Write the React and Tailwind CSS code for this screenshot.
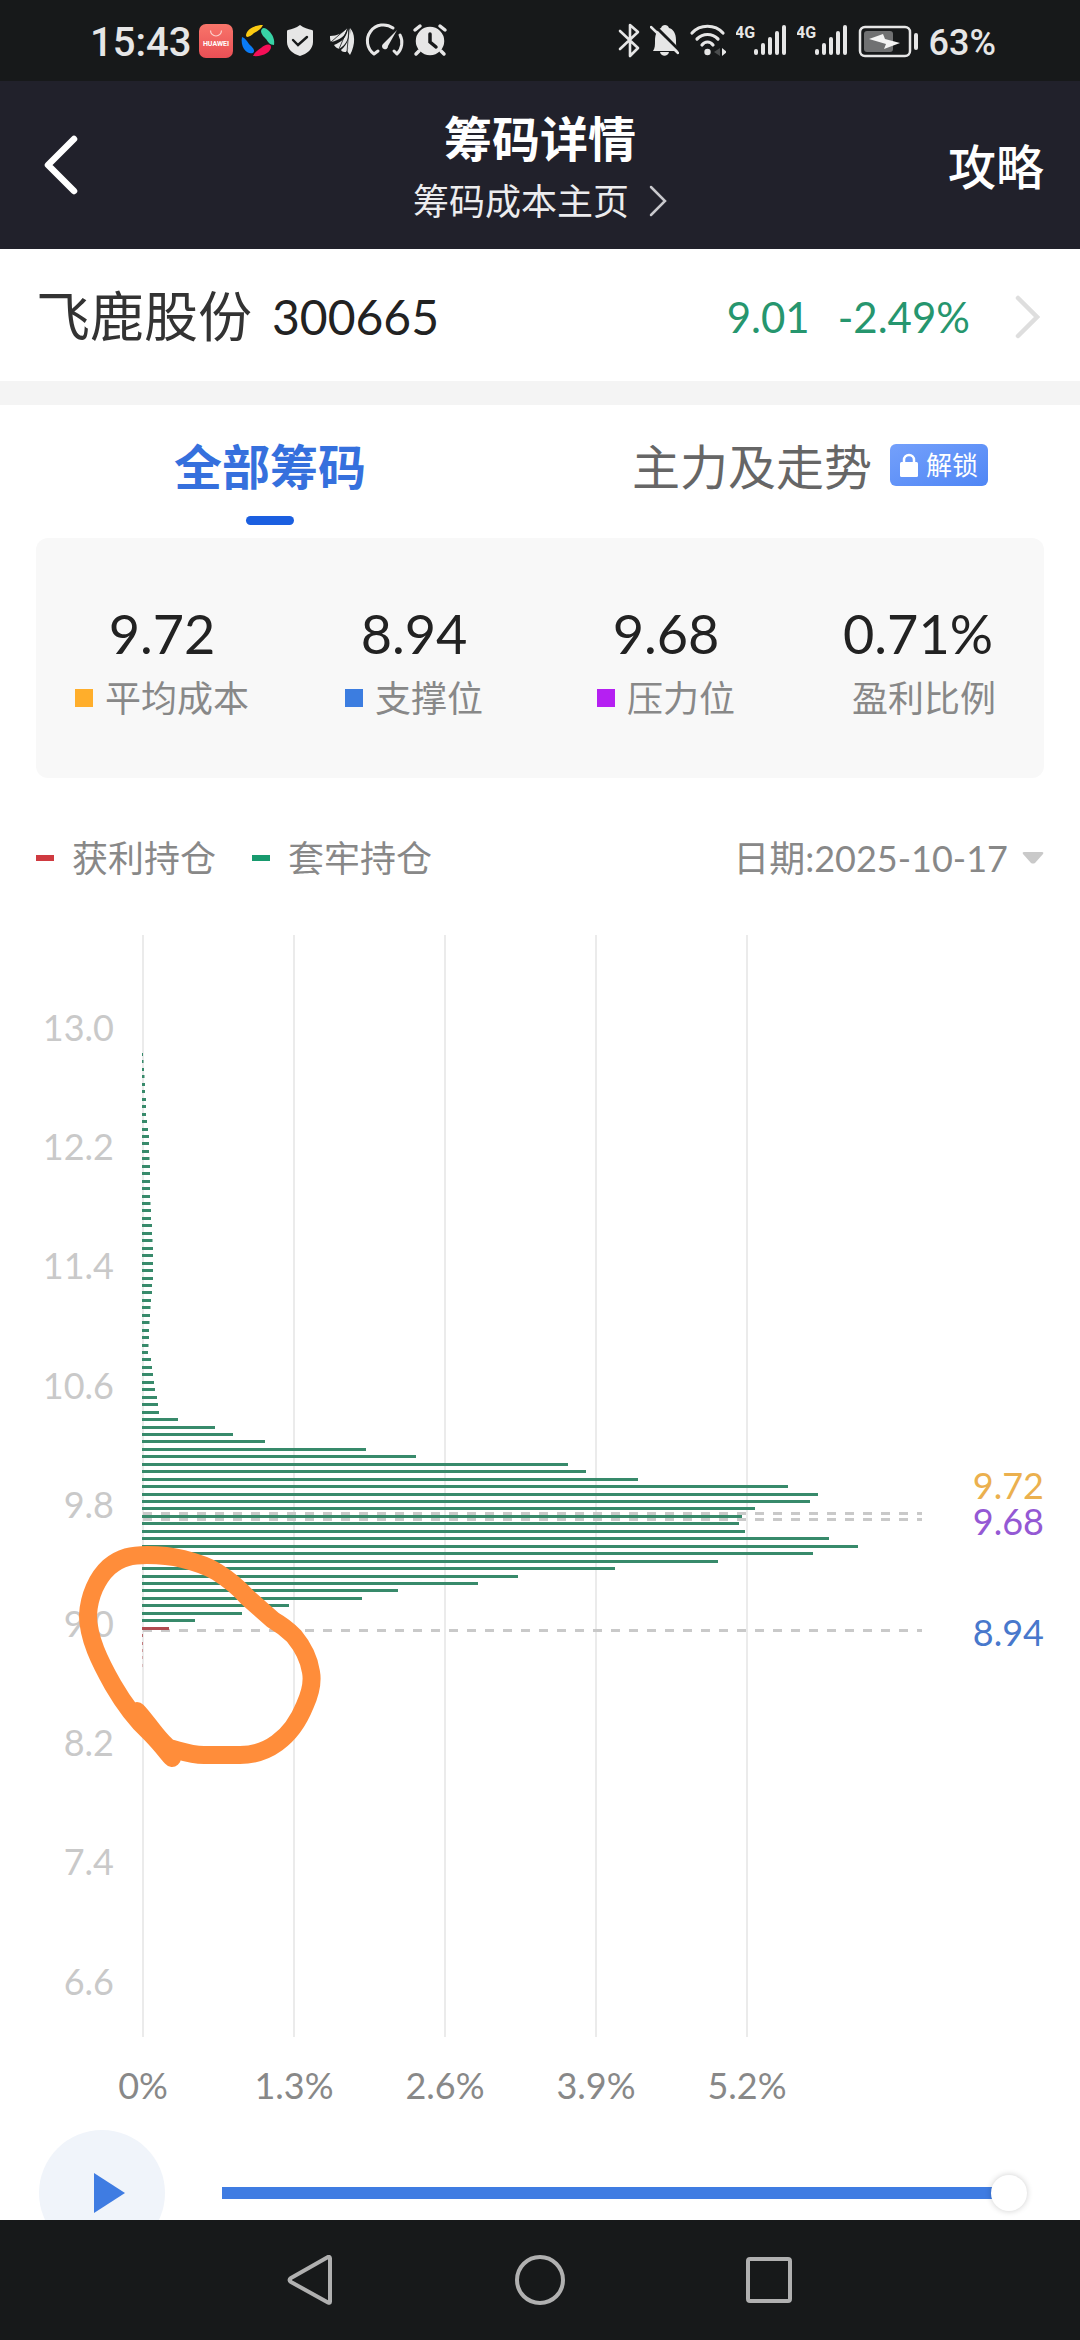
import React, { useState } from "react";

const STATS = [
  { value: "9.72", label: "平均成本", dot: "bg-[#ffae2b]" },
  { value: "8.94", label: "支撑位", dot: "bg-[#3c7de0]" },
  { value: "9.68", label: "压力位", dot: "bg-[#b520f2]" },
  { value: "0.71%", label: "盈利比例" },
];

// bar lengths from the highest price down, one bar per 0.05
const TRAPPED = [
  1, 1.5, 2, 2.5, 3, 3, 4, 4, 4, 5, 6, 7, 7, 7, 7.5, 8, 8, 8, 8, 8, 8.5, 9, 9,
  10, 10, 10.5, 11, 11, 11, 11, 11, 10, 10, 9, 8.5, 8, 7.5, 7, 7, 6.5, 6, 9, 10,
  11, 12, 13, 15, 16, 17, 36, 73, 91, 123, 224, 274, 426, 444, 496, 646, 676,
  668, 613, 600, 597, 603, 687, 716, 671, 576, 473, 376, 336, 256, 220, 147,
  100, 53,
];
const PROFIT = [27, 0.8, 0.7, 0.5, 0.4, 0.3];

const PRICES = ["13.0", "12.2", "11.4", "10.6", "9.8", "9.0", "8.2", "7.4", "6.6"];
const PERCENTS = ["0%", "1.3%", "2.6%", "3.9%", "5.2%"];

const LEVELS = [
  { value: "9.72", line: 630, text: 617, color: "#ebb04e" },
  { value: "9.68", line: 636, text: 653, color: "#9459d4" },
  { value: "8.94", line: 747, text: 764, color: "#4878cc" },
];

const Signal = () => (
  <svg width="51" height="35" viewBox="0 0 51 35" fill="#e6e6e6">
    <text x="-1" y="15" fontSize="16" fontWeight="700">4G</text>
    <rect x="18" y="26" width="4" height="6" rx="2" />
    <rect x="25" y="20" width="4" height="12" rx="2" />
    <rect x="32" y="14" width="4" height="18" rx="2" />
    <rect x="39" y="8" width="4" height="24" rx="2" />
    <rect x="46" y="2" width="4" height="30" rx="2" />
  </svg>
);

const StatusBar = () => (
  <div className="flex h-[81px] shrink-0 items-center justify-between bg-[#17191a] pl-[90px] pr-[84px] font-['Roboto',sans-serif] text-[#e6e6e6]">
    <div className="flex items-center gap-2">
      <span className="pt-1 text-[40px] leading-[48px] font-medium">15:43</span>
      <svg width="34" height="35" viewBox="0 0 34 35">
        <defs>
          <linearGradient id="store" x1="0" y1="0" x2="0" y2="1">
            <stop offset="0" stopColor="#f8756a" />
            <stop offset="1" stopColor="#e94f55" />
          </linearGradient>
        </defs>
        <rect y="1" width="34" height="34" rx="7" fill="url(#store)" />
        <path d="M11.500 7.500a5.500 5.500 0 0 0 11 0" fill="none" stroke="#fbd0cc" strokeWidth="1.200" />
        <text x="17" y="23" fontSize="7" fontWeight="700" textAnchor="middle" fill="#fff">HUAWEI</text>
      </svg>
      <svg width="34" height="35" viewBox="0 0 34 35">
        <path d="M5 12C6 6 13 2 22 2c-2 4-5 6-9 8-3 3-8 6-8 2z" fill="#fccb12" />
        <path d="M20 8c1-4 4-4 8 0 4 4 6 9 5 14-4 0-6-3-8-6-2-2-5-5-5-8z" fill="#38d3a6" />
        <path d="M1 14c3 1 5 4 7 7 3 3 7 6 4 9-3 1-6 0-9-4C1 23 0 18 1 14z" fill="#0a7bf5" />
        <path d="M12 33c2-4 5-6 8-8 4-4 10-5 10-1 0 5-8 10-18 9z" fill="#f50f57" />
      </svg>
      <svg width="34" height="35" viewBox="0 0 34 35">
        <path d="M17 2c4 3 8 4 12 5 1 0 1 1 1 2v10c0 7-6 12-13 14C10 31 4 26 4 19V9c0-1 0-2 1-2 4-1 8-2 12-5z" fill="#e6e6e6" />
        <path d="m10 17 5 5 9-8" fill="none" stroke="#17191a" strokeWidth="2.400" strokeLinecap="round" />
      </svg>
      <svg width="34" height="35" viewBox="0 0 34 35" fill="#e6e6e6">
        <path d="M5 13c7 0 13-3 17-8-1 8-7 12-16 14-1-2-1-4-1-6z" />
        <path d="M9 22c8-3 13-8 14-17 2 9-1 16-9 21-2-1-4-2-5-4z" />
        <path d="M16 27c7-6 9-13 8-22 4 8 3 17-3 24-2 0-4 0-5-2z" />
        <path d="M25 5c5 5 6 16 0 27l-3-4c4-7 4-15 3-23z" />
        <path d="M6 19 22 5M14 26 23 5M22 29 24 5" fill="none" stroke="#17191a" strokeWidth="0.800" />
      </svg>
      <svg className="overflow-visible" width="34" height="35" viewBox="0 0 34 35" fill="none" stroke="#e6e6e6" strokeWidth="3" strokeLinecap="round" strokeLinejoin="round">
        <path d="M11 28l-4 3A16 16 0 0 1 26 5M33 12A16 16 0 0 1 30 31l-3-3" />
        <path d="M30 7 16 21a3 3 0 1 0 5 2z" fill="#e6e6e6" stroke="none" />
      </svg>
      <svg width="40" height="35" viewBox="0 0 40 35" fill="none" stroke="#e6e6e6" strokeWidth="3.500" strokeLinecap="round">
        <circle cx="21" cy="18" r="12.500" fill="#e6e6e6" />
        <path d="M6 7l5-4M36 7l-5-4M10 28l-3 3M32 28l3 3" />
        <path d="M21 11v8l6 5" stroke="#17191a" />
      </svg>
    </div>

    <div className="flex items-center gap-2.5">
      <svg width="22" height="35" viewBox="0 0 22 35" fill="none" stroke="#e6e6e6" strokeWidth="2.600" strokeLinejoin="round" strokeLinecap="round">
        <path d="M2 8l18 17-8 8V2l8 7L2 26" />
      </svg>
      <svg width="29" height="35" viewBox="0 0 29 35">
        <path d="M3 28c2-3 2-6 2-10 0-8 3-12 6-13 1-4 7-4 8 0 4 1 7 5 7 12 0 5 0 8 2 11zM10 29h9c-1 5-8 5-9 0z" fill="#e6e6e6" />
        <path d="M3 1l28 28" stroke="#17191a" strokeWidth="3" />
        <path d="M1 4l27 26" stroke="#e6e6e6" strokeWidth="2.500" strokeLinecap="round" />
      </svg>
      <svg width="37" height="35" viewBox="0 0 37 35" fill="none" stroke="#e6e6e6" strokeWidth="3.200" strokeLinecap="round">
        <path d="M3 10C11 1 26 1 34 10M8 16c6-6 15-6 21 0M13 22c3-4 8-4 11 0" />
        <circle cx="18.500" cy="29" r="3.200" fill="#e6e6e6" stroke="none" />
        <path d="M31 25v8l-6-4z" fill="#4a4c4d" stroke="none" />
        <path d="M33 25v8l5-4z" fill="#e6e6e6" stroke="none" />
      </svg>
      <Signal />
      <Signal />
      <svg width="61" height="35" viewBox="0 0 61 35">
        <rect x="2" y="4" width="50" height="29" rx="5" fill="none" stroke="#e6e6e6" strokeWidth="2.500" />
        <rect x="6" y="8" width="29" height="21" rx="3" fill="#707172" />
        <path d="M25 11l2 5 15 4-16 6 2-5-17-5z" fill="#f4f4f4" />
        <rect x="56" y="10" width="4" height="17" rx="2" fill="#e6e6e6" />
      </svg>
      <span className="pt-1 text-[36px] leading-[48px] font-medium">63%</span>
    </div>
  </div>
);

const Header = () => (
  <header className="grid h-[168px] shrink-0 grid-cols-[1fr_auto_1fr] items-center bg-[#21212b] px-9 text-white">
    <button type="button" aria-label="返回" className="justify-self-start p-2">
      <svg width="34" height="60" viewBox="0 0 34 60" fill="none" stroke="#fff" strokeWidth="6.500" strokeLinecap="round" strokeLinejoin="round">
        <path d="M30 4 4 30l26 26" />
      </svg>
    </button>
    <div className="flex flex-col items-center pt-1">
      <h1 className="text-[48px] leading-[68px] font-bold">筹码详情</h1>
      <a href="#home" className="flex items-center gap-5 text-[36px] leading-[56px] text-[#ececee]">
        筹码成本主页
        <svg width="18" height="32" viewBox="0 0 18 32" fill="none" stroke="#c9c9cd" strokeWidth="2.500" strokeLinecap="round">
          <path d="M2 2l14 14L2 30" />
        </svg>
      </a>
    </div>
    <a href="#guide" className="justify-self-end pt-1 text-[48px] leading-[68px] font-medium">攻略</a>
  </header>
);

const Chart = () => (
  <svg viewBox="0 0 1080 1238" className="block w-full" fontSize="36">
    {PERCENTS.map((p, i) => (
      <g key={p}>
        <rect x={142 + i * 151} y="53" width="2" height="1102" fill="#ebebeb" />
        <text x={143 + i * 151} y="1217" textAnchor="middle" fill="#888">{p}</text>
      </g>
    ))}
    {PRICES.map((p, i) => (
      <text key={p} x="114" y={Math.round(159 + i * 119.2)} textAnchor="end" fill="#c9c9c9">{p}</text>
    ))}
    {LEVELS.map((l) => (
      <g key={l.value}>
        <path d={`M143 ${l.line + 1.5}H922`} stroke="#c9c9c9" strokeWidth="3" strokeDasharray="9 9" />
        <text x="1044" y={l.text} textAnchor="end" fill={l.color}>{l.value}</text>
      </g>
    ))}
    {TRAPPED.map((w, i) => (
      <rect key={i} x="142" y={Math.round(171 + i * 7.45)} width={w} height="3" fill="#388a6b" />
    ))}
    {PROFIT.map((w, i) => (
      <rect key={i} x="142" y={Math.round(171 + (TRAPPED.length + i) * 7.45)} width={w} height="3" fill="#b04a4f" />
    ))}
    <path
      d="M137 829C146 838 158 858 169 866C181 869 190 873 204 873H240C252 873 266 869 277 861C291 851 299 838 305 823C310 812 313 801 311 790C309 776 303 765 294 754C288 748 280 742 273 738L247 715C238 705 228 697 217 690C206 683 195 680 183 677C171 674 160 673 147 673C132 673 121 675 109 685C97 696 89 714 88 733C88 756 100 780 113 803C124 822 136 838 150 851C158 859 166 869 172 876"
      fill="none"
      stroke="#ff8d3a"
      strokeWidth="18"
      strokeLinecap="round"
      strokeLinejoin="round"
    />
  </svg>
);

const App = () => {
  const [day, setDay] = useState(100);

  return (
    <div className="flex h-screen flex-col overflow-hidden bg-white font-['Lato','Noto_Sans_CJK_SC',sans-serif]">
      <StatusBar />
      <Header />

      <main className="min-h-0 flex-1 overflow-hidden">
        <a href="#stock" className="flex h-[132px] items-center px-9 pt-1 text-[#222]">
          <span className="text-[54px] leading-[72px] text-[#333]">飞鹿股份</span>
          <span className="ml-5 text-[48px] leading-[72px]">300665</span>
          <span className="ml-auto flex gap-7 text-[42px] leading-[60px] text-[#26966e]">
            <span>9.01</span>
            <span>-2.49%</span>
          </span>
          <svg className="mr-1 ml-11" width="26" height="44" viewBox="0 0 26 44" fill="none" stroke="#dedede" strokeWidth="4.500" strokeLinecap="round">
            <path d="M4 3l19 19L4 41" />
          </svg>
        </a>
        <div className="h-6 bg-[#f4f4f4]" />

        <div className="grid h-[133px] grid-cols-2">
          <button type="button" className="flex flex-col items-center pt-7">
            <span className="text-[48px] leading-[68px] font-bold text-[#3570dd]">全部筹码</span>
            <span className="mt-[15px] h-[9px] w-12 rounded-full bg-[#1b5fe0]" />
          </button>
          <button type="button" className="flex items-start justify-center gap-[18px] pt-7">
            <span className="text-[48px] leading-[68px] text-[#666]">主力及走势</span>
            <span className="mt-[11px] flex h-[42px] items-center gap-2 rounded-md bg-linear-to-br from-[#74a0fb] to-[#4f86f5] px-2.5 text-[26px] leading-[42px] text-white">
              <svg width="18" height="24" viewBox="0 0 18 24">
                <path d="M4 10V7a5 5 0 0 1 10 0v3" fill="none" stroke="#fff" strokeWidth="2.500" />
                <rect y="9" width="18" height="15" rx="1.500" fill="#fff" />
              </svg>
              解锁
            </span>
          </button>
        </div>

        <dl className="mx-9 grid h-60 grid-cols-4 content-center rounded-xl bg-[#f8f8f8] pt-1">
          {STATS.map((s) => (
            <div key={s.label} className="flex flex-col-reverse items-center">
              <dt className="flex items-center gap-3 text-[36px] leading-[52px] text-[#888]">
                <span className={s.dot ? `size-[18px] ${s.dot}` : ""} />
                {s.label}
              </dt>
              <dd className="text-[54px] leading-[76px] text-[#222]">{s.value}</dd>
            </div>
          ))}
        </dl>

        <div className="mx-9 mt-14 flex h-12 items-center text-[36px] leading-[48px] text-[#888]">
          <span className="mr-[18px] h-1.5 w-[18px] bg-[#cf3a40]" />
          获利持仓
          <span className="mr-[18px] ml-9 h-1.5 w-[18px] bg-[#189a6e]" />
          套牢持仓
          <button type="button" className="ml-auto flex items-center gap-3.5">
            日期:2025-10-17
            <svg width="22" height="12" viewBox="0 0 22 12" fill="#c9c9c9">
              <path d="M2 0h18q2 0 1 2l-8 9q-2 1-4 0L1 2Q0 0 2 0z" />
            </svg>
          </button>
        </div>

        <Chart />

        <div className="flex items-center pt-2.5 pr-[53px] pl-[39px]">
          <button type="button" aria-label="播放" className="flex size-[126px] shrink-0 items-center justify-center rounded-full bg-[#f0f4fa]">
            <svg className="ml-3.5" width="31" height="40" viewBox="0 0 31 40">
              <path d="M0 0l31 20L0 40z" fill="#3f7ce2" />
            </svg>
          </button>
          <input
            type="range"
            aria-label="日期"
            value={day}
            onChange={(e) => setDay(Number(e.target.value))}
            className="ml-[57px] h-9 min-w-0 flex-1 appearance-none bg-transparent [&::-webkit-slider-runnable-track]:h-3 [&::-webkit-slider-runnable-track]:bg-[linear-gradient(to_right,#3f7ce2_calc(100%-18px),transparent_0)] [&::-webkit-slider-thumb]:-mt-3 [&::-webkit-slider-thumb]:size-9 [&::-webkit-slider-thumb]:appearance-none [&::-webkit-slider-thumb]:rounded-full [&::-webkit-slider-thumb]:bg-white [&::-webkit-slider-thumb]:shadow-[0_0_6px_rgba(0,0,0,0.2)]"
          />
        </div>
      </main>

      <nav className="flex h-[120px] shrink-0 items-center justify-center gap-[180px] bg-[#17191a]">
        <button type="button" aria-label="后退">
          <svg width="50" height="50" viewBox="0 0 50 50" fill="none" stroke="#b0b0b0" strokeWidth="4" strokeLinejoin="round">
            <path d="M45 3.500v43q0 2-2 1L6 27q-3-2 0-4L43 2q2-.500 2 1.500z" />
          </svg>
        </button>
        <button type="button" aria-label="主屏幕">
          <svg width="50" height="50" viewBox="0 0 50 50" fill="none" stroke="#b0b0b0" strokeWidth="4">
            <circle cx="25" cy="25" r="23" />
          </svg>
        </button>
        <button type="button" aria-label="最近任务">
          <svg width="50" height="50" viewBox="0 0 50 50" fill="none" stroke="#b0b0b0" strokeWidth="4">
            <rect x="3" y="4" width="42" height="42" rx="2" />
          </svg>
        </button>
      </nav>
    </div>
  );
};

export default App;
